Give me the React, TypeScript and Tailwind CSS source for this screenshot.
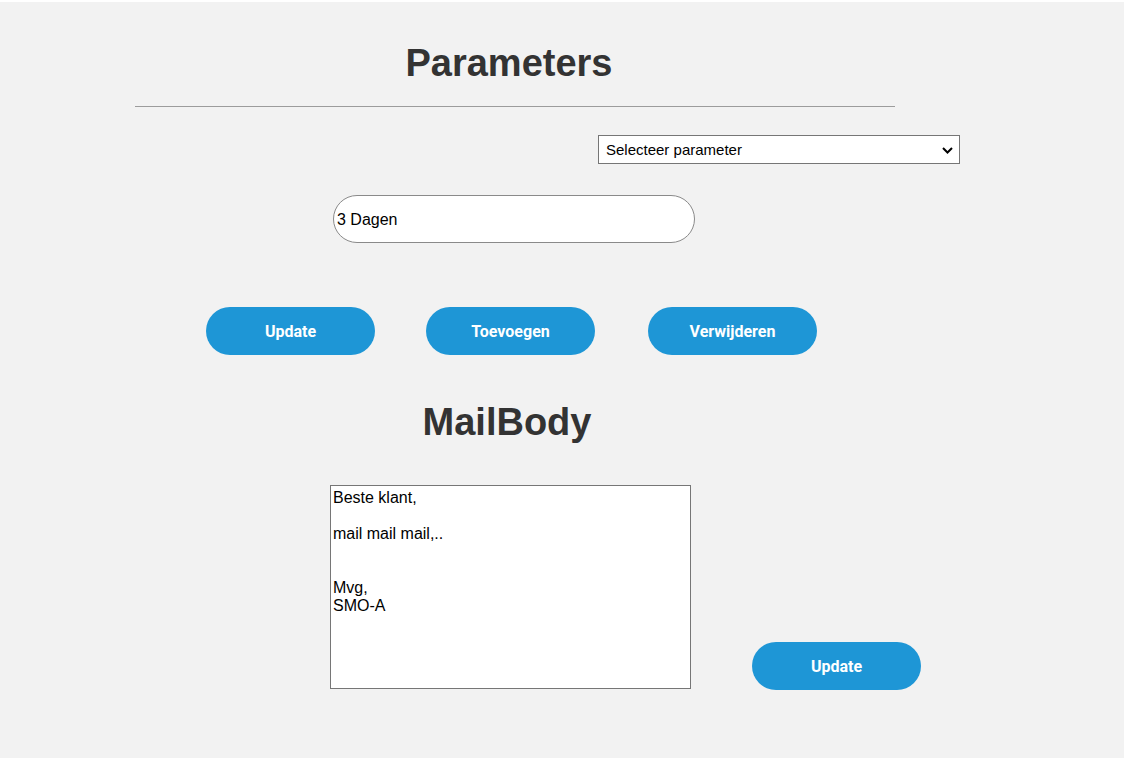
import { useState } from 'react';

const mailText = `Beste klant,

mail mail mail,..


Mvg,
SMO-A`;

const PillButton = ({ label, className = '' }: { label: string; className?: string }) => (
  <button
    className={`w-[169px] h-[48px] pt-[2px] rounded-full bg-[#1e96d6] text-white text-[16px] font-bold font-['Roboto',sans-serif] ${className}`}
  >
    {label}
  </button>
);

export default function App() {
  const [param, setParam] = useState('');
  const [value, setValue] = useState('3 Dagen');
  const [body, setBody] = useState(mailText);

  return (
    <div className="min-h-screen bg-[#f2f2f2] border-t-2 border-white font-['Liberation_Sans',Arial,sans-serif] text-black">
      <h1 className="mt-[39px] ml-[135px] w-[748px] text-center text-[38px] leading-[44px] font-bold text-[#333333]">
        Parameters
      </h1>
      <div className="mt-[21px] ml-[135px] w-[760px] border-t border-[#9c9c9c]" />

      <div className="relative mt-[28px] ml-[598px] w-[362px] h-[29px]">
        <select
          value={param}
          onChange={(e) => setParam(e.target.value)}
          className="appearance-none w-full h-full bg-white border border-[#767676] pl-[7px] pt-[2px] text-[15px] text-black outline-none"
        >
          <option value="">Selecteer parameter</option>
          <option value="dagen">Dagen</option>
        </select>
        <svg
          className="absolute right-[7px] top-[12px] pointer-events-none"
          width="11"
          height="7"
          viewBox="0 0 11 7"
        >
          <path d="M1 1l4.5 4.5L10 1" fill="none" stroke="#000" strokeWidth="2" />
        </svg>
      </div>

      <input
        type="text"
        value={value}
        onChange={(e) => setValue(e.target.value)}
        className="block mt-[31px] ml-[333px] w-[362px] h-[48px] rounded-full bg-white border border-[#8a8a8a] pl-[3px] pt-[2px] text-[16px] outline-none"
      />

      <div className="mt-[64px] ml-[206px] flex gap-[51px]">
        <PillButton label="Update" />
        <PillButton label="Toevoegen" />
        <PillButton label="Verwijderen" className="ml-[2px]" />
      </div>

      <h2 className="mt-[45px] ml-[135px] w-[744px] text-center text-[38px] leading-[44px] font-bold text-[#333333]">
        MailBody
      </h2>

      <div className="mt-[41px] ml-[330px] flex items-end gap-[61px]">
        <textarea
          value={body}
          onChange={(e) => setBody(e.target.value)}
          className="w-[361px] h-[204px] bg-white border border-[#767676] px-[2px] pt-[3px] text-[16px] leading-[18px] resize-none outline-none"
        />
        <PillButton label="Update" className="mb-[-1px] w-[168px]" />
      </div>
    </div>
  );
}
